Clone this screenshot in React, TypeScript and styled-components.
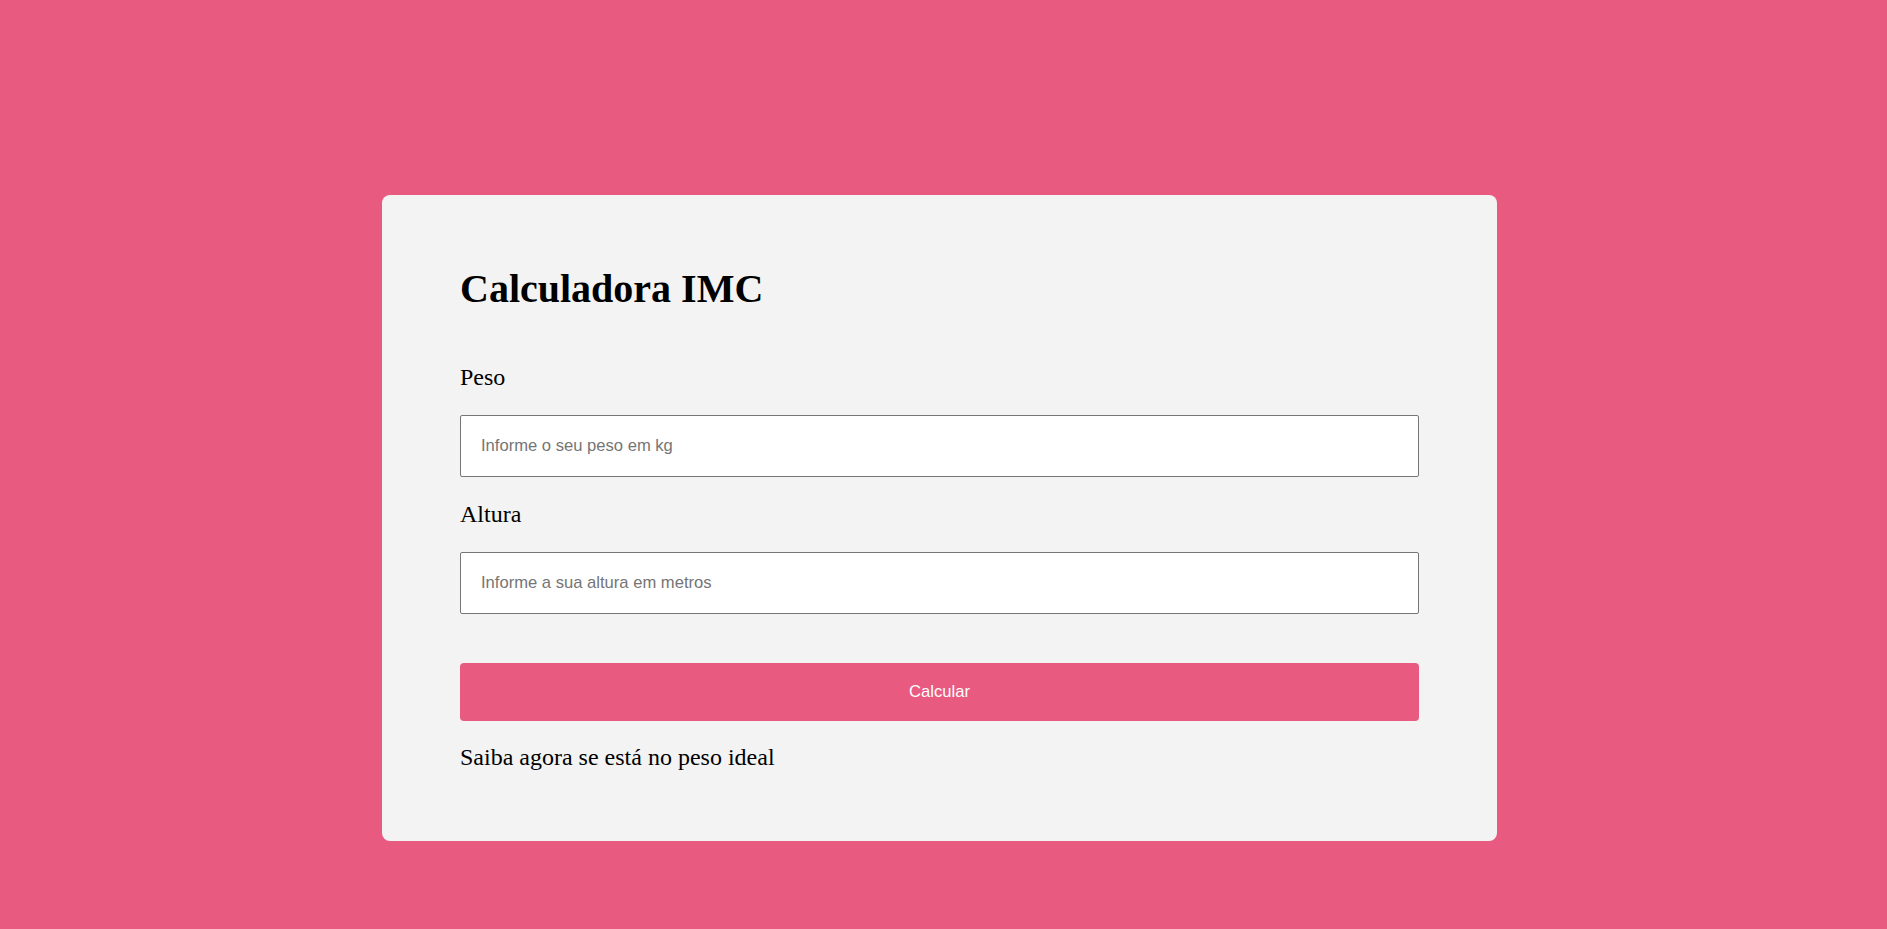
import React from "react";
import styled, { createGlobalStyle } from "styled-components";

const GlobalStyle = createGlobalStyle`
  html, body {
    margin: 0;
    padding: 0;
  }
  body {
    background: #e85a80;
    font-family: "Liberation Serif", "Times New Roman", serif;
    color: #000;
  }
`;

const Page = styled.main`
  min-height: 100vh;
  box-sizing: border-box;
  padding-top: 195px;
  padding-left: 382px;
`;

const Card = styled.section`
  box-sizing: border-box;
  width: 1115px;
  background: #f3f3f3;
  border-radius: 8px;
  padding: 71px 78px 70px;
`;

const Title = styled.h1`
  margin: 0 0 52px;
  font-family: "Liberation Serif", "Times New Roman", serif;
  font-size: 40px;
  font-weight: 700;
  line-height: 46px;
`;

const Form = styled.form`
  display: flex;
  flex-direction: column;
  gap: 24px;
  margin: 0;
`;

const Label = styled.label`
  font-family: "Liberation Serif", "Times New Roman", serif;
  font-size: 24px;
  line-height: normal;
`;

const Input = styled.input`
  box-sizing: border-box;
  width: 100%;
  height: 62px;
  margin: 0;
  padding: 0 20px;
  border: 1px solid #767676;
  border-radius: 2px;
  background: #fff;
  font-family: "Liberation Sans", Arial, sans-serif;
  font-size: 16.6px;
  color: #000;
  outline: none;

  &::placeholder {
    color: #757575;
  }
`;

const Button = styled.button`
  box-sizing: border-box;
  width: 100%;
  height: 58px;
  margin-top: 25px;
  border: none;
  border-radius: 4px;
  background: #e85a80;
  color: #fff;
  font-family: "Liberation Sans", Arial, sans-serif;
  font-size: 16.6px;
  cursor: pointer;
`;

const Result = styled.p`
  margin: 23px 0 0;
  font-family: "Liberation Serif", "Times New Roman", serif;
  font-size: 24px;
  line-height: normal;
`;

export default function App() {
  return (
    <>
      <GlobalStyle />
      <Page>
        <Card>
          <Title>Calculadora IMC</Title>
          <Form onSubmit={(e) => e.preventDefault()}>
            <Label htmlFor="peso">Peso</Label>
            <Input id="peso" type="number" placeholder="Informe o seu peso em kg" />
            <Label htmlFor="altura">Altura</Label>
            <Input id="altura" type="number" placeholder="Informe a sua altura em metros" />
            <Button type="submit">Calcular</Button>
          </Form>
          <Result>Saiba agora se está no peso ideal</Result>
        </Card>
      </Page>
    </>
  );
}
